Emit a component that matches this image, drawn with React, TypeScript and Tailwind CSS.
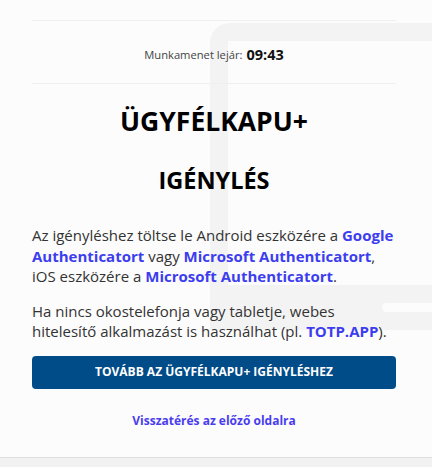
import React from "react";

const linkCls = "font-bold text-[#3d3df0]";

// Faint device outline that sits behind the card content
const DeviceWatermark = () => (
  <svg
    className="pointer-events-none absolute left-0 top-0"
    width="432"
    height="467"
    viewBox="0 0 432 467"
    aria-hidden="true"
  >
    <path
      d="M230 23 H440 V41 H228 V285 H440 V330 H210 V43 A20 20 0 0 1 230 23 Z"
      fill="#f3f3f3"
    />
    <rect x="382" y="303" width="70" height="9" rx="4.5" fill="#fcfcfc" />
  </svg>
);

const App = () => {
  return (
    <div
      className="relative h-[467px] w-[432px] overflow-hidden bg-[#fcfcfc] text-[#333]"
      style={{ fontFamily: '"Open Sans", "Noto Sans", sans-serif' }}
    >
      <DeviceWatermark />
      <div className="relative flex h-[458px] flex-col border-b border-[#dedede] pl-8 pr-9 pt-5">
        {/* Session timer */}
        <div className="flex h-16 items-center justify-center gap-1 border-y border-[#efefef] pt-[6px]">
          <span className="text-[11.2px] text-[#444]">Munkamenet lejár:</span>
          <span className="text-[14.5px] font-bold text-[#111]">09:43</span>
        </div>

        <h1 className="mt-[21px] text-center text-[26.5px] font-bold leading-8 text-black">
          ÜGYFÉLKAPU+
        </h1>
        <h2 className="mt-[27px] text-center text-[23.5px] font-bold leading-8 text-black">
          IGÉNYLÉS
        </h2>

        <p className="mt-[29px] text-[15px] leading-[20.5px]">
          Az igényléshez töltse le Android eszközére a{" "}
          <a className={linkCls}>Google Authenticatort</a> vagy{" "}
          <a className={linkCls}>Microsoft Authenticatort</a>, iOS eszközére a{" "}
          <a className={linkCls}>Microsoft Authenticatort</a>.
        </p>
        <p className="mt-[14px] text-[15px] leading-[20.5px]">
          Ha nincs okostelefonja vagy tabletje, webes hitelesítő alkalmazást is
          használhat (pl. <a className={linkCls}>TOTP.APP</a>).
        </p>

        <button className="mt-[14px] flex h-[33px] w-full items-center justify-center rounded-[4px] bg-[#004c89] text-[12px] font-bold text-white">
          TOVÁBB AZ ÜGYFÉLKAPU+ IGÉNYLÉSHEZ
        </button>

        <a className="mt-[23px] text-center text-[12px] font-bold text-[#4a3cef]">
          Visszatérés az előző oldalra
        </a>
      </div>
      <div className="h-[9px] bg-[#f2f2f2]" />
    </div>
  );
};

export default App;
